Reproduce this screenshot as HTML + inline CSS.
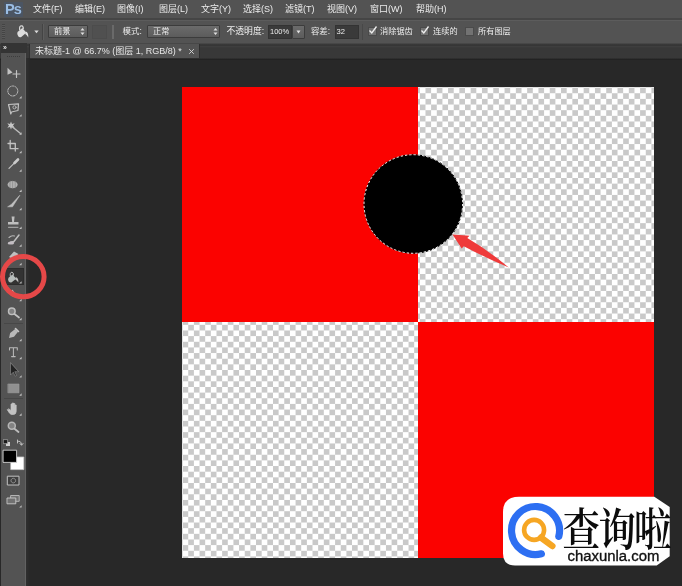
<!DOCTYPE html>
<html>
<head>
<meta charset="utf-8">
<title>Photoshop</title>
<style>
html,body{margin:0;padding:0}
body{width:682px;height:586px;overflow:hidden;background:#282828;position:relative;font-family:"Liberation Sans","Noto Sans CJK SC",sans-serif;color:#e8e8e8}
.abs{position:absolute}
#menubar{left:0;top:0;width:682px;height:19px;background:#535353}
#menuline{left:0;top:18px;width:682px;height:2px;background:#454545}
#optbar{left:0;top:20px;width:682px;height:23px;background:#535353;border-top:1px solid #5c5c5c;box-sizing:border-box}
#optline{left:0;top:42.500px;width:682px;height:1px;background:#474747}
#tabstrip{left:0;top:43.500px;width:682px;height:16.500px;background:linear-gradient(#3a3a3a 0,#363636 1.500px,#3e3e3e 2.500px,#383838 4px,#383838 13.500px,#2c2c2c 14.800px,#222 15.500px,#242424 16.500px)}
#tab{left:29px;top:44.300px;width:171px;height:14.200px;background:#535353;border-left:1px solid #2e2e2e;border-right:1px solid #2e2e2e;box-sizing:border-box}
.menu{position:absolute;top:3px;font-size:9px;line-height:12px;white-space:nowrap;color:#ececec;filter:blur(.3px)}
.opt{position:absolute;top:26px;font-size:8.2px;line-height:11px;white-space:nowrap;color:#ececec;filter:blur(.3px)}
.dd{position:absolute;top:25px;height:13px;box-sizing:border-box;border:1px solid #3c3c3c;background:linear-gradient(#6b6b6b,#5c5c5c);border-radius:1px}
.field{position:absolute;top:25px;height:14px;box-sizing:border-box;background:#3a3a3a;border:1px solid #333}
.cb{position:absolute;top:27px;width:8.500px;height:8.500px;box-sizing:border-box;border:1px solid #4a4a4a;background:#727272}
#toolbar{left:1px;top:43px;width:25px;height:543px;background:#535353;border-right:1px solid #626262;box-sizing:border-box}
#tbshadow{left:26px;top:58px;width:4px;height:528px;background:linear-gradient(90deg,#303030,#282828)}
#tbhead{left:1px;top:43px;width:26px;height:10px;background:#343434}
#canvas{left:182px;top:87px;width:472px;height:471px;background:#e4e4e4;overflow:hidden}
#checker{position:absolute;left:-22.100px;top:-22.200px;width:520px;height:520px;background:repeating-conic-gradient(#c9c9c9 0 25%,#ffffff 0 50%) 0 0/11.306px 11.306px;filter:blur(.6px)}
.red{position:absolute;background:#fb0200}
</style>
</head>
<body>
<div id="menubar" class="abs"></div>
<div id="menuline" class="abs"></div>
<div id="optbar" class="abs"></div>
<div id="optline" class="abs"></div>
<div id="tabstrip" class="abs"></div>
<div id="tab" class="abs"></div>

<!-- Ps logo -->
<div class="abs" style="left:4px;top:2px;width:19px;height:15px;background:#4b5563;border-radius:1px"></div>
<div class="abs" style="left:5px;top:0px;font-size:14.500px;line-height:18px;font-weight:bold;color:#9abde4;letter-spacing:-.9px;filter:blur(.3px)">Ps</div>

<!-- menu -->
<div class="menu" style="left:33px">文件(F)</div>
<div class="menu" style="left:75px">编辑(E)</div>
<div class="menu" style="left:117px">图像(I)</div>
<div class="menu" style="left:159px">图层(L)</div>
<div class="menu" style="left:201px">文字(Y)</div>
<div class="menu" style="left:243px">选择(S)</div>
<div class="menu" style="left:285px">滤镜(T)</div>
<div class="menu" style="left:327px">视图(V)</div>
<div class="menu" style="left:370px">窗口(W)</div>
<div class="menu" style="left:416px">帮助(H)</div>

<!-- options bar -->
<div class="abs" style="left:2px;top:24px;width:3px;height:15px;background:repeating-linear-gradient(#444 0 1px,#5a5a5a 1px 2px)"></div>
<svg class="abs" style="left:13.500px;top:23.500px;filter:blur(.3px)" width="16.500" height="16.500" viewBox="0 0 15 15">
  <path d="M3.2 7.2 L7.6 3.6 L11.2 8 L6.6 11.8 Q5 12.6 3.8 11.2 Q2.4 9.2 3.2 7.2Z" fill="#dcdcdc"/>
  <path d="M5.2 5.6 Q4.6 1.6 7 1.6 Q8.6 1.8 8.4 4.6" fill="none" stroke="#dcdcdc" stroke-width="1.1"/>
  <path d="M10.6 6.8 Q13.2 7.4 13 12.2 Q11.6 10 10.2 9.2Z" fill="#dcdcdc"/>
</svg>
<svg class="abs" style="left:34px;top:30px" width="5" height="4" viewBox="0 0 5 4"><path d="M.3 .5h4.400L2.500 3.300z" fill="#dcdcdc"/></svg>
<div class="abs" style="left:42px;top:24px;width:1px;height:16px;background:#444"></div>
<div class="abs" style="left:43px;top:24px;width:1px;height:16px;background:#5d5d5d"></div>

<div class="dd" style="left:48px;width:40px"></div>
<div class="opt" style="left:54px">前景</div>
<svg class="abs" style="left:80px;top:27px" width="5" height="9" viewBox="0 0 5 9"><path d="M.5 3.5L2.5 1l2 2.5zM.5 5.5L2.5 8l2-2.5z" fill="#e0e0e0"/></svg>

<div class="abs" style="left:92px;top:25px;width:15px;height:14px;background:#505050;border:1px solid #4c4c4c;box-sizing:border-box"></div>
<div class="abs" style="left:112px;top:25px;width:2px;height:14px;background:#6a6a6a"></div>

<div class="opt" style="left:122.500px;font-size:8.500px">模式:</div>
<div class="dd" style="left:147px;width:73px"></div>
<div class="opt" style="left:153px">正常</div>
<svg class="abs" style="left:213px;top:27px" width="5" height="9" viewBox="0 0 5 9"><path d="M.5 3.5L2.5 1l2 2.5zM.5 5.5L2.5 8l2-2.5z" fill="#e0e0e0"/></svg>

<div class="opt" style="left:226.500px;font-size:8.800px">不透明度:</div>
<div class="field" style="left:268px;width:24px"></div>
<div class="opt" style="left:270px;font-size:7.500px">100%</div>
<div class="dd" style="left:292px;width:13px;top:25px;height:14px"></div>
<svg class="abs" style="left:296px;top:30px" width="5" height="4" viewBox="0 0 5 4"><path d="M.5 .5h4L2.500 3.500z" fill="#e0e0e0"/></svg>

<div class="opt" style="left:311px;font-size:8.400px">容差:</div>
<div class="field" style="left:334.500px;width:24.500px"></div>
<div class="opt" style="left:336.500px;font-size:7.600px">32</div>
<div class="abs" style="left:362px;top:24px;width:1px;height:16px;background:#484848"></div>

<div class="cb" style="left:368px"></div>
<svg class="abs" style="left:368px;top:25px" width="10" height="10" viewBox="0 0 10 10"><path d="M1.500 5.500L3.800 8 8.500 1.500" fill="none" stroke="#eee" stroke-width="1.300"/></svg>
<div class="opt" style="left:380px">消除锯齿</div>
<div class="cb" style="left:420px"></div>
<svg class="abs" style="left:420px;top:25px" width="10" height="10" viewBox="0 0 10 10"><path d="M1.500 5.500L3.800 8 8.500 1.500" fill="none" stroke="#eee" stroke-width="1.300"/></svg>
<div class="opt" style="left:433px">连续的</div>
<div class="cb" style="left:465px"></div>
<div class="opt" style="left:478px">所有图层</div>

<!-- document tab -->
<div class="abs" style="left:35px;top:45px;font-size:9px;line-height:12px;white-space:nowrap;color:#e6e6e6;filter:blur(.3px)">未标题-1 @ 66.7% (图层 1, RGB/8) *</div>
<svg class="abs" style="left:188px;top:48px" width="7" height="7" viewBox="0 0 7 7"><path d="M1.200 1.200l4.600 4.600M5.800 1.200L1.200 5.800" stroke="#d8d8d8" stroke-width=".9" fill="none"/></svg>

<!-- toolbar -->
<div id="toolbar" class="abs"></div>
<div id="tbshadow" class="abs"></div>
<div id="tbhead" class="abs"></div>
<div class="abs" style="left:3px;top:44px;font-size:7px;line-height:8px;color:#e0e0e0;font-weight:bold;filter:blur(.2px)">»</div>
<div class="abs" style="left:7px;top:56px;width:14px;height:1px;background:repeating-linear-gradient(90deg,#3c3c3c 0 1px,#535353 1px 2px)"></div>

<div class="abs" style="left:4px;top:268px;width:20px;height:17px;background:#333;border:1px solid #2c2c2c;box-sizing:border-box"></div>
<div class="abs" style="left:4px;top:323px;width:19px;height:1px;background:#474747"></div>
<div class="abs" style="left:4px;top:398px;width:19px;height:1px;background:#474747"></div>
<svg class="abs" style="left:0;top:60px;filter:blur(.4px)" width="30" height="460" viewBox="0 60 30 460" fill="none" stroke-linecap="round" stroke-linejoin="round">
<g opacity=".85">
<path d="M21.6 96.0v2.400h-2.400z" fill="#d8d8d8"/><path d="M21.6 114.2v2.400h-2.400z" fill="#d8d8d8"/><path d="M21.6 132.3v2.400h-2.400z" fill="#d8d8d8"/><path d="M21.6 150.8v2.400h-2.400z" fill="#d8d8d8"/><path d="M21.6 169.3v2.400h-2.400z" fill="#d8d8d8"/><path d="M21.6 189.5v2.400h-2.400z" fill="#d8d8d8"/><path d="M21.6 207.8v2.400h-2.400z" fill="#d8d8d8"/><path d="M21.6 226.6v2.400h-2.400z" fill="#d8d8d8"/><path d="M21.6 244.3v2.400h-2.400z" fill="#d8d8d8"/><path d="M21.6 262.8v2.400h-2.400z" fill="#d8d8d8"/><path d="M21.6 281.2v2.400h-2.400z" fill="#d8d8d8"/><path d="M21.6 298.8v2.400h-2.400z" fill="#d8d8d8"/><path d="M21.6 317.8v2.400h-2.400z" fill="#d8d8d8"/><path d="M21.6 338.8v2.400h-2.400z" fill="#d8d8d8"/><path d="M21.6 356.8v2.400h-2.400z" fill="#d8d8d8"/><path d="M21.6 375.2v2.400h-2.400z" fill="#d8d8d8"/><path d="M21.6 393.3v2.400h-2.400z" fill="#d8d8d8"/><path d="M21.6 413.3v2.400h-2.400z" fill="#d8d8d8"/><path d="M21.6 505.2v2.400h-2.400z" fill="#d8d8d8"/>
<!-- move -->
<path d="M7.500 67.800V74.700L12.500 72.500Z" fill="#d6d6d6"/>
<path d="M13 74h7M16.500 70.500v7" stroke="#d6d6d6" stroke-width="1.200"/>
<!-- elliptical marquee -->
<circle cx="12.800" cy="91" r="5" stroke="#d0d0d0" stroke-width="1" stroke-dasharray="1.600 1.200"/>
<!-- polygonal lasso -->
<path d="M8.500 104.500L18.500 103.800 18 110.500 11.500 112 10.800 114Z" stroke="#d6d6d6" stroke-width="1.200"/>
<circle cx="14.500" cy="107.300" r="1.600" stroke="#d0d0d0" stroke-width=".9"/>
<!-- magic wand -->
<path d="M11 121.500l1 2.500 2.700-.8-1.700 2.300 1.700 2.300-2.700-.8-1 2.500-1-2.500-2.700 .8 1.700-2.300-1.700-2.300 2.700 .8z" fill="#dcdcdc"/>
<path d="M12.500 127l8 6.500" stroke="#d0d0d0" stroke-width="1.400"/>
<!-- crop -->
<path d="M10.200 140.500v8.200H18M8 143.500h7.300V151" stroke="#d6d6d6" stroke-width="1.300"/>
<!-- eyedropper -->
<path d="M9 168.400l6-6" stroke="#d0d0d0" stroke-width="1.300"/>
<path d="M14.500 163l3.500-3.500" stroke="#e0e0e0" stroke-width="2.600"/>
<!-- healing brush -->
<ellipse cx="12.600" cy="184.600" rx="5" ry="3.600" fill="#c4c4c4"/>
<path d="M10 181v7M12.600 181v7M15.200 181v7" stroke="#888" stroke-width=".6"/>
<!-- brush -->
<path d="M8 206.800h4.500l7.300-11.500-8.300 9z" fill="#d4d4d4" stroke="#d4d4d4" stroke-width=".6"/>
<!-- stamp -->
<path d="M11.600 216.500h3l-.6 5.500h4.500v2.600H8v-2.600h4.200z" fill="#d2d2d2"/>
<path d="M8.500 227.300h9.500" stroke="#c4c4c4" stroke-width="1"/>
<!-- history brush -->
<path d="M8.500 243.500q3-2.500 5-1.500l5.500-7" stroke="#d4d4d4" stroke-width="1.500"/>
<ellipse cx="11" cy="243" rx="3" ry="1.600" fill="#d8d0d8"/>
<path d="M9 237.500q2.500-2.500 5.500-1.500" stroke="#c8c8c8" stroke-width="1.100"/>
<!-- eraser -->
<path d="M9 257l5-5.500 4.500 2.500-5 5.500z" fill="#d4d4d4"/>
<!-- paint bucket (selected) -->
<g transform="translate(.3 1)"><path d="M8.200 276.800l4-3.400 3.800 4.300-4.600 3.600q-1.800 .6-3-.9-1.200-1.900-.2-3.600z" fill="#cfd6d4"/>
<path d="M10 275.200q-.6-4 1.700-4 1.700 .2 1.500 3" stroke="#d6d6d6" stroke-width="1"/>
<path d="M15.500 276q2.800 .8 2.600 5.400-1.500-2.200-3-3z" fill="#d6d6d6"/></g>
<!-- blur drop -->
<path d="M12.500 289.500q4 5 0 7-4-2 0-7z" fill="#d0d0d0"/>
<!-- dodge -->
<circle cx="11.800" cy="311.300" r="3.300" stroke="#d0d0d0" stroke-width="1.500" fill="#8a8a8a"/>
<path d="M14.500 314l4.500 3.500" stroke="#d4d4d4" stroke-width="1.700"/>
<!-- pen -->
<path d="M9 338l1.200-5 5-4 2.800 2.800-4 5z" fill="#cccccc"/>
<path d="M15.500 328.500l3 3" stroke="#dcdcdc" stroke-width="1.600"/>
<!-- T -->
<path d="M9.500 350v-2.200h7.800V350M13.400 348v8.500M11.600 356.600h3.600" stroke="#cdcdcd" stroke-width="1.050"/>
<!-- path selection -->
<path d="M10.500 363v12l2.800-2.800 1.800 4 1.500-.7-1.800-3.800h3.500z" fill="#1c1c1c" stroke="#9a9a9a" stroke-width=".6"/>
<!-- rectangle -->
<rect x="8.200" y="384" width="10.800" height="8.800" fill="#9c9c9c" stroke="#aaa" stroke-width=".6"/>
<!-- hand -->
<path d="M9 409l2 1.500v-6.500h1.200v4.500-5.500h1.300v5.500-5h1.300v5.500l.2-4h1.200v6.500q0 2.500-2.500 3h-2.500q-1.500-.5-3.800-4.500z" fill="#d8d8d8" stroke="#d8d8d8" stroke-width=".7"/>
<!-- zoom -->
<circle cx="11.800" cy="425.800" r="3.500" stroke="#c8c8c8" stroke-width="1.500" fill="#8c8c8c"/>
<path d="M14.500 428.700l4 3.300" stroke="#d0d0d0" stroke-width="1.800"/>
<!-- default colors / swap -->
<rect x="6" y="442" width="4" height="4" fill="#e8e8e8"/>
<rect x="3.600" y="439.600" width="4" height="4" fill="#111" stroke="#ccc" stroke-width=".6"/>
<path d="M17.500 441.500q3.500-1.500 4 3M20 443.500l1.500 1.800 1.500-1.800M17.500 440v3" stroke="#d8d8d8" stroke-width="1"/>
</g>
<!-- swatches -->
<rect x="11" y="457" width="12.800" height="12.600" fill="#fff" stroke="#c8c8c8" stroke-width=".8"/>
<rect x="3.400" y="450.200" width="13.200" height="12.200" fill="#000" stroke="#d0d0d0" stroke-width=".9"/>
<g opacity=".85">
<!-- quick mask -->
<rect x="7.700" y="476.200" width="11.300" height="8.800" fill="#3c3c3c" stroke="#d4d4d4" stroke-width="1"/>
<circle cx="13.300" cy="480.600" r="2.300" stroke="#bbb" stroke-width=".8" stroke-dasharray="1 .8"/>
<!-- screen mode -->
<rect x="11" y="495.500" width="8.200" height="5.800" fill="#777" stroke="#d0d0d0" stroke-width=".9"/>
<rect x="7.400" y="498" width="8.400" height="5.800" fill="#777" stroke="#e0e0e0" stroke-width=".9"/>
</g>
</svg>


<!-- canvas -->
<div id="canvas" class="abs">
  <div id="checker"></div>
  <div class="red" style="left:0;top:0;width:235.700px;height:234.800px"></div>
  <div class="red" style="left:236.200px;top:235.200px;width:236px;height:236px"></div>
</div>

<!-- black filled selection with marching ants -->
<svg class="abs" style="left:350px;top:140px" width="130" height="130" viewBox="350 140 130 130">
  <circle cx="413.300" cy="204" r="49" fill="#000"/>
  <circle cx="413.300" cy="204" r="49.300" fill="none" stroke="#000" stroke-width="1"/>
  <circle cx="413.300" cy="204" r="49.300" fill="none" stroke="#fff" stroke-width="1" stroke-dasharray="2.200 2.100"/>
</svg>
<!-- red arrow annotation -->
<svg class="abs" style="left:445px;top:225px;filter:blur(.4px)" width="75" height="55" viewBox="445 225 75 55">
  <path d="M452.500 234.500 L469.500 235.800 L467.300 238 Q488 250 508.800 267.600 Q484 257 463.800 246.200 L461.700 248.400 Z" fill="#ef3a3a"/>
</svg>
<!-- red ring annotation -->
<svg class="abs" style="left:0;top:250px;filter:blur(.4px)" width="52" height="54" viewBox="0 250 52 54">
  <ellipse cx="23.300" cy="276.700" rx="20.800" ry="20.100" fill="none" stroke="#e54848" stroke-width="5"/>
</svg>
<!-- watermark -->
<svg class="abs" style="left:500px;top:494px;filter:blur(.4px)" width="175" height="76" viewBox="500 494 175 76"><path d="M519 496.800H654.300L669.700 507V556.300L656.700 565.500H515Q503 565.500 503 553.500V512Q503 496.800 519 496.800Z" fill="#fff"/></svg>
<svg class="abs" style="left:503px;top:497px" width="70" height="69" viewBox="503 497 70 69">
  <path d="M558.800 536.400 A24 24 0 1 0 541.400 553.800" fill="none" stroke="#2d6ff2" stroke-width="7.200" stroke-linecap="round"/>
  <circle cx="534.100" cy="529.900" r="10" fill="none" stroke="#f6a623" stroke-width="4.600"/>
  <path d="M541 537.600 L552.300 546" fill="none" stroke="#f6a623" stroke-width="6.500" stroke-linecap="round"/>
</svg>
<div class="abs" id="wmcn" style="left:562.500px;top:500.800px;font-family:'Liberation Serif','Noto Serif CJK SC',serif;font-weight:600;font-size:37.500px;line-height:50px;color:#0c0c0c;white-space:nowrap;letter-spacing:-1.800px;transform:scaleY(1.217);transform-origin:0 0;filter:blur(.3px)">查询啦</div>
<div class="abs" id="wmen" style="left:567.500px;top:544.500px;font-size:14.900px;line-height:22px;color:#111;white-space:nowrap;-webkit-text-stroke:.35px #111;filter:blur(.3px)">chaxunla.com</div>

</body>
</html>
